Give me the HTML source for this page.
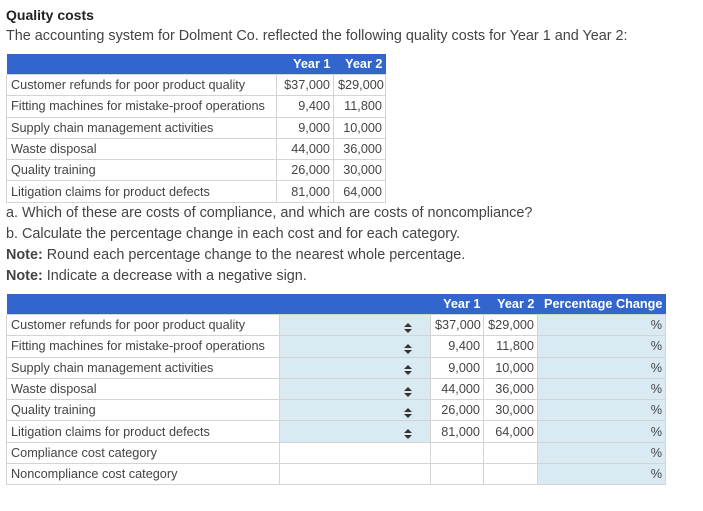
<!DOCTYPE html>
<html><head><meta charset="utf-8"><style>
body{margin:0;background:#fff;font-family:"Liberation Sans",sans-serif;color:#444;font-size:14.4px;}
.t{position:absolute;white-space:nowrap;}
table{position:absolute;border-collapse:collapse;font-size:12.7px;table-layout:fixed;}
td,th{border:1px solid #d4d4d4;padding:0 3px 0 4px;height:20.3px;line-height:20px;white-space:nowrap;overflow:hidden;}
th{background:#3366cc;color:#fff;border:none;font-weight:bold;text-align:right;height:19px;}
td.n{text-align:right;}
td.b{background:#d9eaf2;}
.arr{float:right;margin-right:15px;margin-top:5px;}
</style></head><body>
<div class="t" style="left:6px;top:7px;font-weight:bold;font-size:14px;color:#222">Quality costs</div>
<div class="t" style="left:6px;top:28px">The accounting system for Dolment Co. reflected the following quality costs for Year 1 and Year 2:</div>
<table style="left:6px;top:54px;width:379px">
<colgroup><col style="width:270px"><col style="width:57px"><col style="width:52px"></colgroup>
<tr><th></th><th>Year 1</th><th>Year 2</th></tr>
<tr><td>Customer refunds for poor product quality</td><td class="n">$37,000</td><td class="n">$29,000</td></tr>
<tr><td>Fitting machines for mistake-proof operations</td><td class="n">9,400</td><td class="n">11,800</td></tr>
<tr><td>Supply chain management activities</td><td class="n">9,000</td><td class="n">10,000</td></tr>
<tr><td>Waste disposal</td><td class="n">44,000</td><td class="n">36,000</td></tr>
<tr><td>Quality training</td><td class="n">26,000</td><td class="n">30,000</td></tr>
<tr><td>Litigation claims for product defects</td><td class="n">81,000</td><td class="n">64,000</td></tr>
</table>
<div class="t" style="left:6px;top:205px">a. Which of these are costs of compliance, and which are costs of noncompliance?</div>
<div class="t" style="left:6px;top:226px">b. Calculate the percentage change in each cost and for each category.</div>
<div class="t" style="left:6px;top:247px"><b>Note:</b> Round each percentage change to the nearest whole percentage.</div>
<div class="t" style="left:6px;top:268px"><b>Note:</b> Indicate a decrease with a negative sign.</div>
<table style="left:6px;top:294px;width:659px">
<colgroup><col style="width:273px"><col style="width:151px"><col style="width:53px"><col style="width:54px"><col style="width:128px"></colgroup>
<tr><th></th><th></th><th>Year 1</th><th>Year 2</th><th>Percentage Change</th></tr>
<tr><td>Customer refunds for poor product quality</td><td class="b"><svg class="arr" width="8" height="10"><path d="M4 0L8 4H0ZM0 6H8L4 10Z" fill="#333"/></svg></td><td class="n">$37,000</td><td class="n">$29,000</td><td class="b n">%</td></tr>
<tr><td>Fitting machines for mistake-proof operations</td><td class="b"><svg class="arr" width="8" height="10"><path d="M4 0L8 4H0ZM0 6H8L4 10Z" fill="#333"/></svg></td><td class="n">9,400</td><td class="n">11,800</td><td class="b n">%</td></tr>
<tr><td>Supply chain management activities</td><td class="b"><svg class="arr" width="8" height="10"><path d="M4 0L8 4H0ZM0 6H8L4 10Z" fill="#333"/></svg></td><td class="n">9,000</td><td class="n">10,000</td><td class="b n">%</td></tr>
<tr><td>Waste disposal</td><td class="b"><svg class="arr" width="8" height="10"><path d="M4 0L8 4H0ZM0 6H8L4 10Z" fill="#333"/></svg></td><td class="n">44,000</td><td class="n">36,000</td><td class="b n">%</td></tr>
<tr><td>Quality training</td><td class="b"><svg class="arr" width="8" height="10"><path d="M4 0L8 4H0ZM0 6H8L4 10Z" fill="#333"/></svg></td><td class="n">26,000</td><td class="n">30,000</td><td class="b n">%</td></tr>
<tr><td>Litigation claims for product defects</td><td class="b"><svg class="arr" width="8" height="10"><path d="M4 0L8 4H0ZM0 6H8L4 10Z" fill="#333"/></svg></td><td class="n">81,000</td><td class="n">64,000</td><td class="b n">%</td></tr>
<tr><td>Compliance cost category</td><td></td><td></td><td></td><td class="b n">%</td></tr>
<tr><td>Noncompliance cost category</td><td></td><td></td><td></td><td class="b n">%</td></tr>
</table>
</body></html>
